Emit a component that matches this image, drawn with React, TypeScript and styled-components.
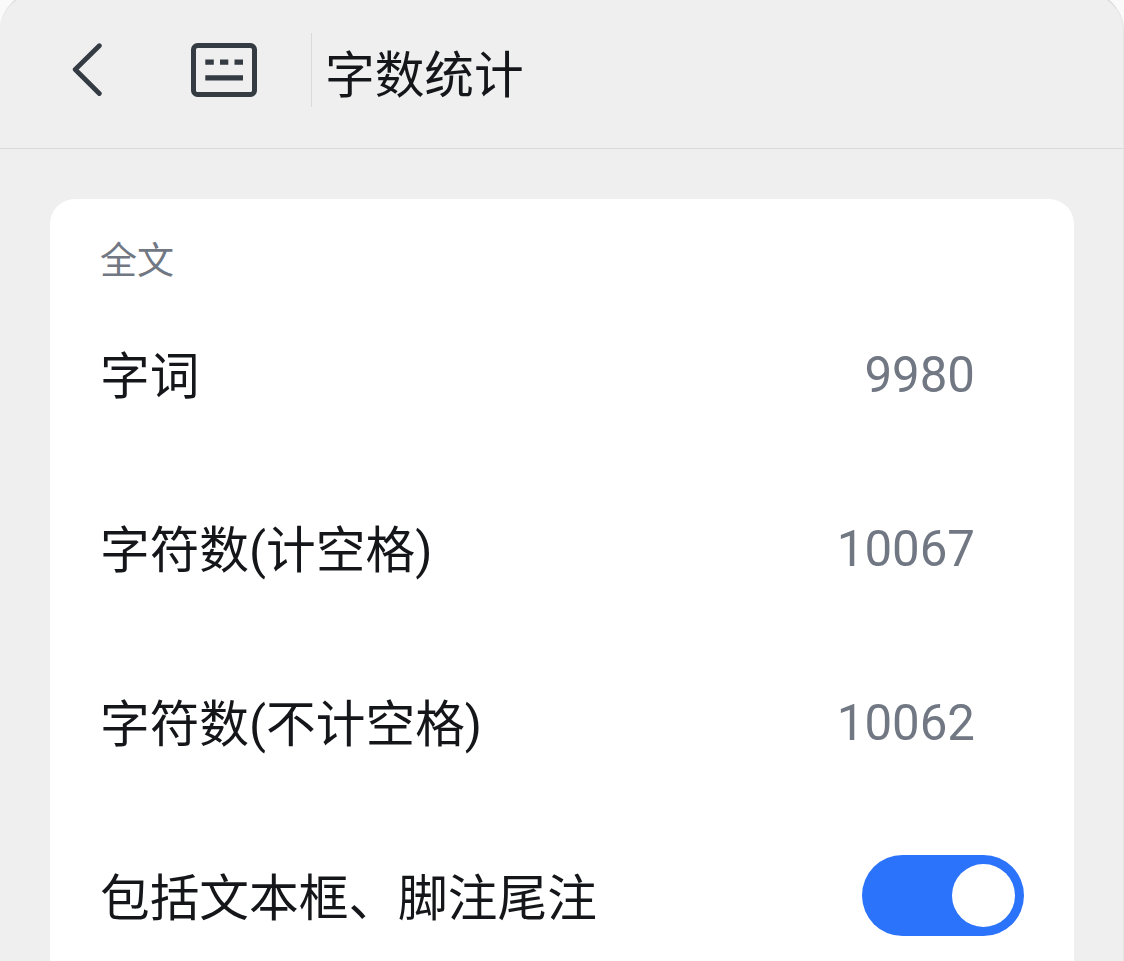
import { useState } from "react";
import styled, { createGlobalStyle } from "styled-components";

const GlobalStyle = createGlobalStyle`
  * {
    box-sizing: border-box;
  }

  body {
    margin: 0;
    background: #fafafa;
    font-family: Roboto, "Noto Sans CJK SC", sans-serif;
  }
`;

const Screen = styled.div`
  display: flex;
  align-items: flex-end;
  height: 961px;
  overflow: hidden;
`;

// Taller than the screen, so the top edge of the sheet is cut off
const Panel = styled.main`
  flex: 1;
  flex-shrink: 0;
  height: 969px;
  padding-top: 7px;
  overflow: hidden;
  background: #efefef;
  border: 2px solid #dedede;
  border-width: 2px 1px 0 0;
  border-right-color: #e6e6e6;
  border-radius: 38px 38px 0 0;
`;

const Header = styled.header`
  display: flex;
  align-items: center;
  height: 148px;
  padding: 0 0 9px 70px;
  border-bottom: 1px solid #d9d9d9;
`;

const BackButton = styled.button`
  display: flex;
  padding: 0;
  border: none;
  background: none;
  margin-right: 85px;
`;

const Divider = styled.div`
  width: 1px;
  height: 74px;
  margin: 0 13px 0 52px;
  background: #dadada;
`;

const Title = styled.h1`
  margin: 11px 0 0;
  color: #14161a;
  font-size: 49.7px;
  font-weight: 400;
  line-height: 72px;
`;

const Card = styled.section`
  height: 820px;
  margin: 50px 49px 0 50px;
  padding: 36px 50px 0 50px;
  background: #fff;
  border-radius: 25px;
`;

const SectionLabel = styled.div`
  height: 51px;
  padding-top: 1px;
  color: #717883;
  font-size: 37px;
  line-height: 52px;
`;

const Row = styled.div`
  display: flex;
  align-items: center;
  justify-content: space-between;
  height: 174px;
`;

const Label = styled.span`
  padding-top: 7px;
  color: #14161a;
  font-size: 49.7px;
  line-height: 72px;
`;

const Value = styled.span`
  margin-right: 49px;
  padding-top: 3px;
  color: #717883;
  font-size: 49.2px;
  line-height: 72px;
`;

const Toggle = styled.button<{ $on: boolean }>`
  display: flex;
  justify-content: ${(props) => (props.$on ? "flex-end" : "flex-start")};
  align-items: center;
  width: 162px;
  height: 81px;
  padding: 0 9px;
  border: none;
  border-radius: 41px;
  background: ${(props) => (props.$on ? "#2b73fa" : "#c9cdd4")};
`;

const Knob = styled.span`
  width: 63px;
  height: 63px;
  border-radius: 50%;
  background: #fff;
`;

const BackIcon = () => (
  <svg width="34" height="54" viewBox="0 0 34 54" fill="none">
    <path
      d="M29.3 2.8L5.2 26.5L29.3 50.5"
      stroke="#343b43"
      strokeWidth="4.8"
      strokeLinecap="round"
      strokeLinejoin="round"
    />
  </svg>
);

const KeyboardIcon = () => (
  <svg width="70" height="56" viewBox="0 0 70 56" fill="none" stroke="#343b43">
    <rect x="4.5" y="3.5" width="61" height="49" rx="4" strokeWidth="5" />
    <path
      d="M16.3 20.2H24.8M31 20.2H39.3M45.5 20.2H54M16.3 35.8H54"
      strokeWidth="5.2"
    />
  </svg>
);

const counts = [
  { label: "字词", value: 9980 },
  { label: "字符数(计空格)", value: 10067 },
  { label: "字符数(不计空格)", value: 10062 },
];

export default function App() {
  const [includeNotes, setIncludeNotes] = useState(true);

  return (
    <>
      <GlobalStyle />
      <Screen>
        <Panel>
          <Header>
            <BackButton aria-label="返回">
              <BackIcon />
            </BackButton>
            <KeyboardIcon />
            <Divider />
            <Title>字数统计</Title>
          </Header>
          <Card>
            <SectionLabel>全文</SectionLabel>
            {counts.map(({ label, value }) => (
              <Row key={label}>
                <Label>{label}</Label>
                <Value>{value}</Value>
              </Row>
            ))}
            <Row>
              <Label>包括文本框、脚注尾注</Label>
              <Toggle
                role="switch"
                aria-checked={includeNotes}
                $on={includeNotes}
                onClick={() => setIncludeNotes(!includeNotes)}
              >
                <Knob />
              </Toggle>
            </Row>
          </Card>
        </Panel>
      </Screen>
    </>
  );
}
